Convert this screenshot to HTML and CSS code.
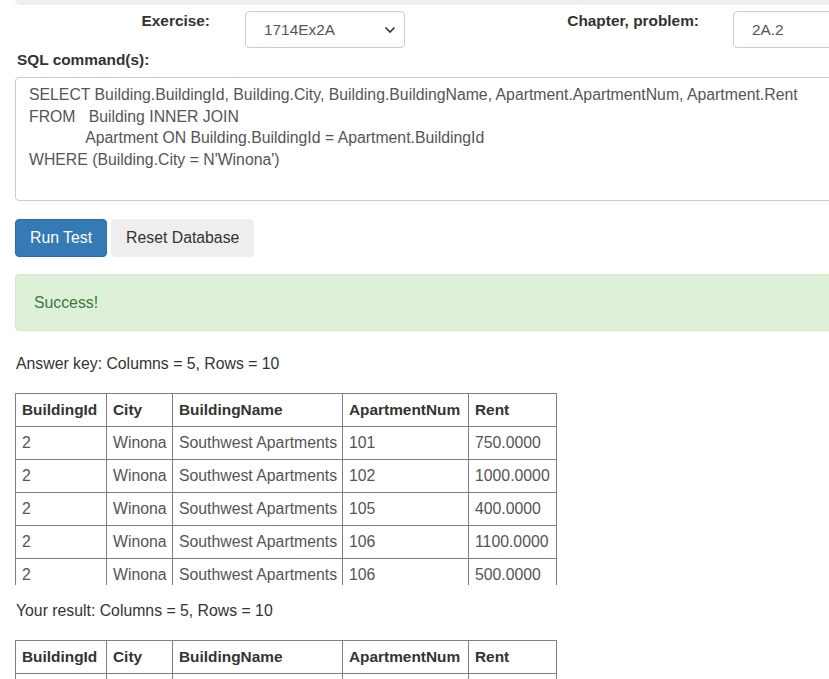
FILE: index.html
```html
<!DOCTYPE html>
<html lang="en">
<head>
<meta charset="utf-8">
<title>SQL Exercise</title>
<link rel="stylesheet" href="styles.css">
</head>
<body>
<div class="page">
  <div class="topbar"></div>
  <div class="form-row">
    <div class="label lbl-ex">Exercise:</div>
    <div class="select">
      <span>1714Ex2A</span>
      <svg class="chev" width="12" height="8" viewBox="0 0 12 8"><path d="M1.5 1.5 L6 6 L10.5 1.5" fill="none" stroke="#333" stroke-width="1.6"/></svg>
    </div>
    <div class="label lbl-ch">Chapter, problem:</div>
    <div class="input">2A.2</div>
  </div>
  <div class="label sql-label">SQL command(s):</div>
  <div class="textarea">SELECT Building.BuildingId, Building.City, Building.BuildingName, Apartment.ApartmentNum, Apartment.Rent
FROM   Building INNER JOIN
             Apartment ON Building.BuildingId = Apartment.BuildingId
WHERE (Building.City = N'Winona')</div>
  <div class="buttons">
    <div class="btn btn-primary">Run Test</div>
    <div class="btn btn-default">Reset Database</div>
  </div>
  <div class="alert">Success!</div>
  <p class="summary">Answer key: Columns = 5, Rows = 10</p>
  <div class="table-wrap">
    <table class="grid">
      <colgroup><col class="c1"><col class="c2"><col class="c3"><col class="c4"><col class="c5"></colgroup>
      <tr><th>BuildingId</th><th>City</th><th>BuildingName</th><th>ApartmentNum</th><th>Rent</th></tr>
      <tr><td>2</td><td>Winona</td><td>Southwest Apartments</td><td>101</td><td>750.0000</td></tr>
      <tr><td>2</td><td>Winona</td><td>Southwest Apartments</td><td>102</td><td>1000.0000</td></tr>
      <tr><td>2</td><td>Winona</td><td>Southwest Apartments</td><td>105</td><td>400.0000</td></tr>
      <tr><td>2</td><td>Winona</td><td>Southwest Apartments</td><td>106</td><td>1100.0000</td></tr>
      <tr><td>2</td><td>Winona</td><td>Southwest Apartments</td><td>106</td><td>500.0000</td></tr>
    </table>
  </div>
  <p class="summary summary2">Your result: Columns = 5, Rows = 10</p>
  <div class="table-wrap">
    <table class="grid">
      <colgroup><col class="c1"><col class="c2"><col class="c3"><col class="c4"><col class="c5"></colgroup>
      <tr><th>BuildingId</th><th>City</th><th>BuildingName</th><th>ApartmentNum</th><th>Rent</th></tr>
      <tr><td>2</td><td>Winona</td><td>Southwest Apartments</td><td>101</td><td>750.0000</td></tr>
    </table>
  </div>
</div>
</body>
</html>
```
FILE: styles.css
```css
html, body {
  margin: 0;
  padding: 0;
  background: #fff;
  overflow: hidden;
}
body {
  font-family: "Liberation Sans", Arial, sans-serif;
  font-size: 15.8px;
  line-height: 22px;
  color: #333;
}
.page {
  width: 1000px;
  padding-left: 15px;
}
.topbar {
  height: 5px;
  background: #eee;
  border-bottom-left-radius: 5px;
}
.form-row {
  display: flex;
  align-items: flex-start;
  padding-top: 5px;
}
.label {
  font-weight: bold;
  font-size: 15.4px;
  color: #333;
}
.lbl-ex {
  width: 195px;
  text-align: right;
}
.select {
  margin-left: 35px;
  margin-top: 1px;
  width: 160px;
  height: 37px;
  box-sizing: border-box;
  border: 1px solid #ccc;
  border-radius: 4px;
  padding: 0 8px 0 18px;
  display: flex;
  align-items: center;
  justify-content: space-between;
  color: #555;
  font-size: 15.4px;
}
.lbl-ch {
  width: 294px;
  text-align: right;
}
.input {
  margin-left: 34px;
  margin-top: 1px;
  width: 200px;
  height: 37px;
  box-sizing: border-box;
  border: 1px solid #ccc;
  border-radius: 4px;
  padding: 0 0 0 18px;
  display: flex;
  align-items: center;
  color: #555;
  font-size: 15.4px;
}
.sql-label {
  margin-top: 1px;
  margin-bottom: 6px;
  padding-left: 2px;
}
.textarea {
  box-sizing: border-box;
  height: 124px;
  border: 1px solid #ccc;
  border-radius: 4px;
  padding: 6px 13px;
  color: #555;
  white-space: pre;
  line-height: 21.7px;
}
.buttons {
  display: flex;
  gap: 4px;
  margin-top: 18px;
}
.btn {
  height: 38px;
  box-sizing: border-box;
  padding: 0 14px;
  border-radius: 4px;
  display: flex;
  align-items: center;
  border: 1px solid transparent;
}
.btn-primary {
  background: #337ab7;
  border-color: #2e6da4;
  color: #fff;
}
.btn-default {
  background: #eee;
  border-color: #eee;
  color: #333;
}
.alert {
  margin-top: 17px;
  height: 57px;
  box-sizing: border-box;
  padding: 0 18px;
  display: flex;
  align-items: center;
  background: #dff0d8;
  border: 1px solid #d6e9c6;
  border-radius: 4px;
  color: #3c763d;
}
.summary {
  margin: 22px 0 18px 1px;
}
.summary2 {
  margin-top: 15px;
}
.table-wrap {
  height: 192px;
  overflow: hidden;
}
.grid {
  border-collapse: collapse;
  table-layout: fixed;
  width: 541px;
}
.c1 { width: 91px; }
.c2 { width: 66px; }
.c3 { width: 170px; }
.c4 { width: 126px; }
.c5 { width: 88px; }
.grid th, .grid td {
  border: 1px solid #808080;
  padding: 5px 5px 5px 6px;
  text-align: left;
  white-space: nowrap;
  overflow: hidden;
  height: 22px;
}
.grid th {
  font-weight: bold;
  font-size: 15.4px;
  color: #333;
}
.grid td {
  color: #555;
}
```
